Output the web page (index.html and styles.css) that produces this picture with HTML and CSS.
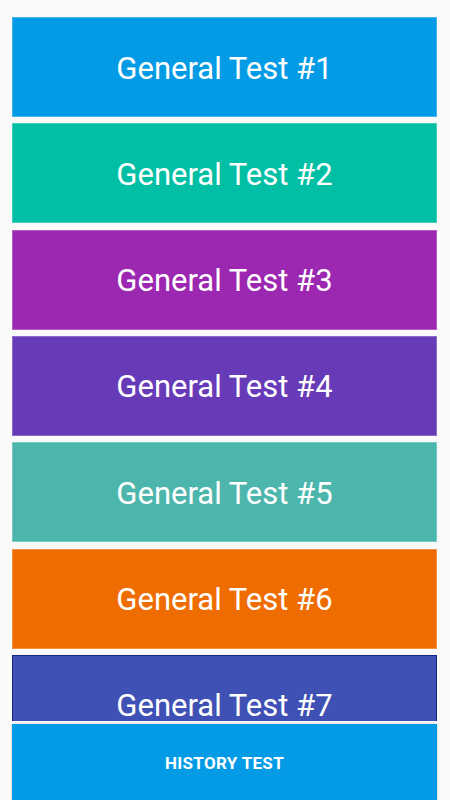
FILE: index.html
```html
<!DOCTYPE html>
<html>
<head>
<meta charset="utf-8">
<link rel="stylesheet" href="styles.css">
</head>
<body>
<div class="screen">
  <div class="list">
    <div class="tile c1">General Test #1</div>
    <div class="tile c2">General Test #2</div>
    <div class="tile c3">General Test #3</div>
    <div class="tile c4">General Test #4</div>
    <div class="tile c5">General Test #5</div>
    <div class="tile c6">General Test #6</div>
    <div class="tile c7">General Test #7</div>
  </div>
  <div class="history">HISTORY TEST</div>
</div>
</body>
</html>
```
FILE: styles.css
```css
html, body {
  margin: 0;
  padding: 0;
  background: #fafafa;
}
.screen {
  width: 450px;
  height: 800px;
  display: flex;
  flex-direction: column;
  font-family: Roboto, "Liberation Sans", sans-serif;
  overflow: hidden;
}
.list {
  height: 721px;
  padding: 17px 13px 0 12px;
  box-sizing: border-box;
  overflow: hidden;
  display: flex;
  flex-direction: column;
  gap: 6.33px;
  flex: none;
}
.tile {
  flex: none;
  height: 100px;
  box-sizing: border-box;
  display: flex;
  align-items: center;
  justify-content: center;
  padding-top: 2px;
  color: #fff;
  font-size: 31px;
  border: 1px solid rgba(255,255,255,0.25);
}
.c1 { background: #039be5; }
.c2 { background: #00bfa5; }
.c3 { background: #9c27b0; }
.c4 { background: #673ab7; }
.c5 { background: #4db6ac; }
.c6 { background: #ef6c00; }
.c7 { background: #3f51b5; border-color: #1a237e; }
.history {
  margin: 3px 13px 0 12px;
  flex: 1;
  background: #039be5;
  color: #fff;
  font-weight: 700;
  font-size: 17px;
  padding-top: 2px;
  display: flex;
  align-items: center;
  justify-content: center;
  letter-spacing: 0.3px;
  box-shadow: 0 0 2px rgba(0,0,0,0.25);
}
```
